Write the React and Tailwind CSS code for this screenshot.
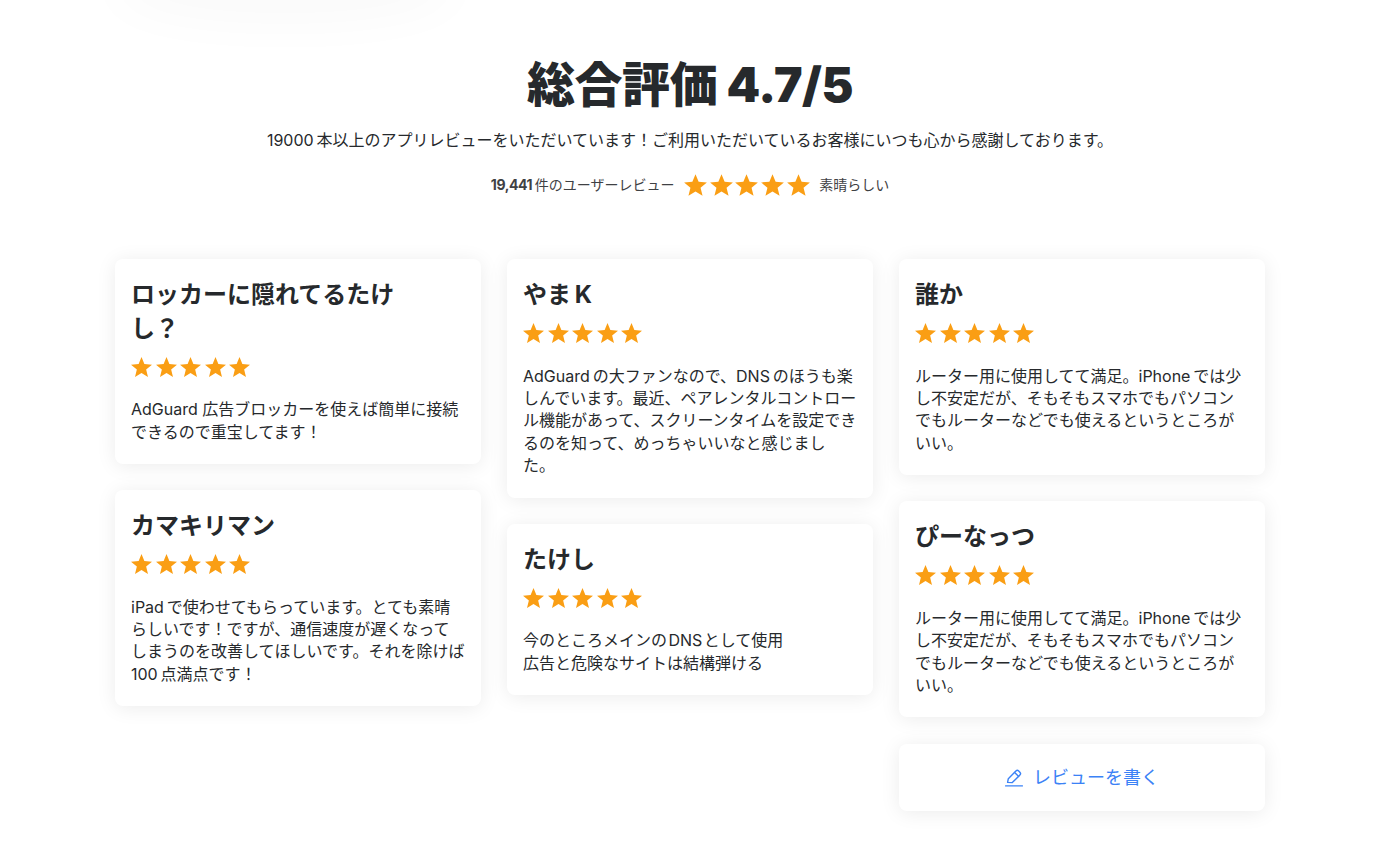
import React from 'react';

const FONT = "font-['Inter','Noto_Sans_CJK_JP',sans-serif]";

const Star = ({ className }) => (
  <svg viewBox="0 0 24 24" className={className} fill="#fa9e14">
    <path d="M12 1.1L15 8.47 22.94 9.05 16.85 14.18 18.76 21.9 12 17.7 5.24 21.9 7.15 14.18 1.06 9.05 9 8.47z" />
  </svg>
);

const Stars = () => (
  <div className="flex gap-[1.5px] mt-[10.5px] mb-[19.5px] -ml-[1px]">
    {[0, 1, 2, 3, 4].map((i) => (
      <Star key={i} className="w-[23px] h-[23px]" />
    ))}
  </div>
);

const ReviewCard = ({ name, children }) => (
  <div className="bg-white rounded-lg px-4 pt-[19px] pb-[21px] shadow-[0_2px_20px_rgba(0,0,0,0.08)]">
    <h3 className="text-[24px] leading-[33.6px] font-bold text-[#26292c] pr-[60px]">{name}</h3>
    <Stars />
    <p className="text-[16px] leading-[22.4px] text-[#26292c]">{children}</p>
  </div>
);

export default function App() {
  return (
    <div className={`relative min-h-[854px] bg-white overflow-hidden ${FONT}`}>
      {/* shadow of the header that sits above the viewport */}
      <div className="absolute left-[135px] -top-[30px] w-[300px] h-[30px] rounded-[50%] shadow-[0_0_50px_24px_rgba(0,0,0,0.025)]" />

      <div className="w-[1150px] ml-[115px] pt-[50px]">
        <h1 className="text-center text-[48px] leading-[70px] font-black tracking-[-0.4px] text-[#26292c]">総合評価 4.7/5</h1>
        <p className="text-center text-[16px] leading-[24px] mt-[8px] text-[#26292c]">
          19000&#8201;本以上のアプリレビューをいただいています！ご利用いただいているお客様にいつも心から感謝しております。
        </p>
        <div className="flex items-center justify-center mt-[21px] text-[14px] text-[#3f4144]">
          <span className="pb-[2px]"><b className="font-bold tracking-[-0.4px]">19,441</b>&#8201;件のユーザーレビュー</span>
          <div className="flex gap-[0.7px] mx-[8.5px]">
            {[0, 1, 2, 3, 4].map((i) => (
              <Star key={i} className="w-[25px] h-[25px]" />
            ))}
          </div>
          <span className="pb-[2px]">素晴らしい</span>
        </div>

        <div className="grid grid-cols-3 gap-[26px] mt-[61px] items-start">
          <div className="flex flex-col gap-[26px]">
            <ReviewCard name="ロッカーに隠れてるたけし？">
              AdGuard 広告ブロッカーを使えば簡単に接続できるので重宝してます！
            </ReviewCard>
            <ReviewCard name="カマキリマン">
              iPad&#8201;で使わせてもらっています。とても素晴らしいです！ですが、通信速度が遅くなってしまうのを改善してほしいです。それを除けば 100&#8201;点満点です！
            </ReviewCard>
          </div>
          <div className="flex flex-col gap-[26px]">
            <ReviewCard name="やま&#8201;K">
              AdGuard&#8201;の大ファンなので、DNS&#8201;のほうも楽しんでいます。最近、ペアレンタルコントロール機能があって、スクリーンタイムを設定できるのを知って、めっちゃいいなと感じました。
            </ReviewCard>
            <ReviewCard name="たけし">
              今のところメインの&#8202;DNS&#8202;として使用<br />広告と危険なサイトは結構弾ける
            </ReviewCard>
          </div>
          <div className="flex flex-col gap-[26px]">
            <ReviewCard name="誰か">
              ルーター用に使用してて満足。iPhone&#8201;では少し不安定だが、そもそもスマホでもパソコンでもルーターなどでも使えるというところがいい。
            </ReviewCard>
            <ReviewCard name="ぴーなっつ">
              ルーター用に使用してて満足。iPhone&#8201;では少し不安定だが、そもそもスマホでもパソコンでもルーターなどでも使えるというところがいい。
            </ReviewCard>
            <a className="flex items-center justify-center gap-[10px] h-[67px] mt-[1px] bg-white rounded-lg text-[18px] text-[#3b82f6] shadow-[0_2px_20px_rgba(0,0,0,0.08)]">
              <svg viewBox="0 0 18 18" className="w-[18px] h-[18px]" fill="none" stroke="#3b82f6" strokeWidth="1.4" strokeLinejoin="round" strokeLinecap="round">
                <path d="M2.6 13.4l.7-3.7L10.9 2a2 2 0 0 1 2.8 0l1.2 1.2a2 2 0 0 1 0 2.8l-7.6 7.6z" />
                <path d="M9.6 3.4l4 4" />
                <path d="M.6 16.9h16.8" />
              </svg>
              レビューを書く
            </a>
          </div>
        </div>
      </div>
    </div>
  );
}
